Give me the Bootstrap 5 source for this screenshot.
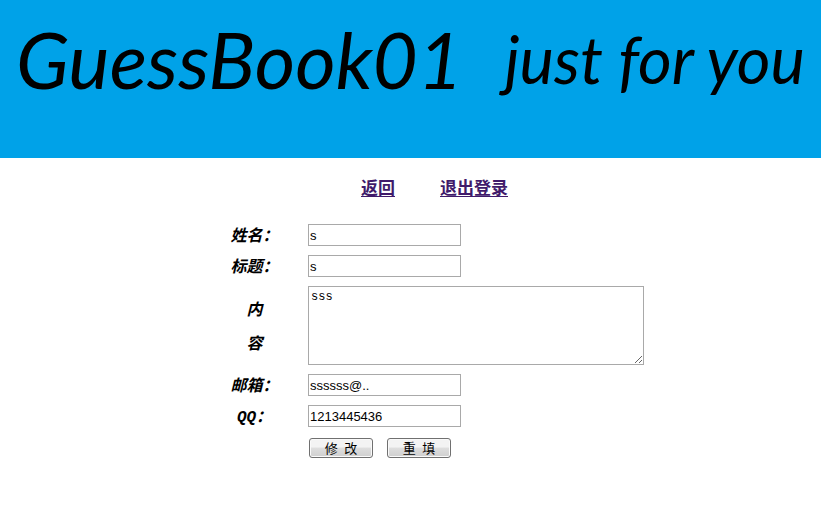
<!DOCTYPE html>
<html lang="zh-CN">
<head>
<meta charset="utf-8">
<meta name="viewport" content="width=device-width, initial-scale=1">
<title>GuessBook01</title>
<link href="https://cdn.jsdelivr.net/npm/bootstrap@5.3.0/dist/css/bootstrap.min.css" rel="stylesheet">
<style>
body { font-family: "Liberation Sans", "Noto Sans CJK SC", sans-serif; color: #000; background: #fff; }
.banner { background: #00a2e8; padding: 9px 16px 49px; font-family: "Segoe Script", "Lato", sans-serif; font-style: italic; line-height: 100px; white-space: nowrap; }
.banner-title { font-size: 78px; margin: 0; line-height: inherit; font-weight: 400; }
.banner-tag { font-size: 65px; }
.sheet { max-width: 467px; }
.top-links { gap: 45px; font-size: 17px; line-height: 20px; padding-top: 21px; padding-bottom: 25px; font-weight: 700; }
.top-links a { color: #401a6b; text-underline-offset: 2px; text-decoration-thickness: 1px; }
.entry-form { display: grid; grid-template-columns: 131px 1fr; row-gap: 9px; align-items: center; }
.entry-form label { font: italic 700 16px/22px "Liberation Mono", "Noto Sans CJK SC", monospace; padding-top: 2px; margin-bottom: -2px; }
.entry-form .tall-label { line-height: 34px; }
.entry-form input, .entry-form textarea { border: 1px solid #a9a9a9; border-radius: 0; padding: 1px; color: #000; background: #fff; }
.entry-form input { width: 153px; height: 22px; font-size: 13px; line-height: 18px; }
.entry-form textarea { height: 79px; padding: 1px 2px; font: 12px/18px "Liberation Mono", monospace; resize: both; }
.actions { gap: 14px; padding: 2px 1px; }
.actions .btn { width: 64px; height: 20px; padding: 0; border: 1px solid #707070; border-radius: 3px; font: 13px/18px "Noto Sans CJK SC", sans-serif; color: #000; background: linear-gradient(#f3f3f3 0 45%, #dedede 50%, #cfcfcf); box-shadow: inset 0 0 0 1px #fafafa; white-space: pre; }
</style>
</head>
<body>
<header class="banner d-flex justify-content-between align-items-center">
  <h1 class="banner-title">GuessBook01</h1>
  <span class="banner-tag">just for you</span>
</header>
<main class="sheet mx-auto">
  <nav class="top-links d-flex justify-content-center ps-5">
    <a href="#">返回</a>
    <a href="#">退出登录</a>
  </nav>
  <form class="entry-form">
    <label class="ps-4 text-center" for="name">姓名：</label>
    <input id="name" type="text" value="s">
    <label class="ps-4 text-center" for="title">标题：</label>
    <input id="title" type="text" value="s">
    <label class="ps-4 text-center tall-label" for="content">内<br>容</label>
    <textarea id="content" class="w-100 d-block">sss</textarea>
    <label class="ps-4 text-center" for="mail">邮箱：</label>
    <input id="mail" type="text" value="ssssss@..">
    <label class="ps-4 text-center" for="qq">QQ：</label>
    <input id="qq" type="text" value="1213445436">
    <span></span>
    <div class="actions d-flex">
      <button class="btn" type="submit">修&ensp;改</button>
      <button class="btn" type="reset">重&ensp;填</button>
    </div>
  </form>
</main>
<script src="https://cdn.jsdelivr.net/npm/bootstrap@5.3.0/dist/js/bootstrap.bundle.min.js"></script>
</body>
</html>
